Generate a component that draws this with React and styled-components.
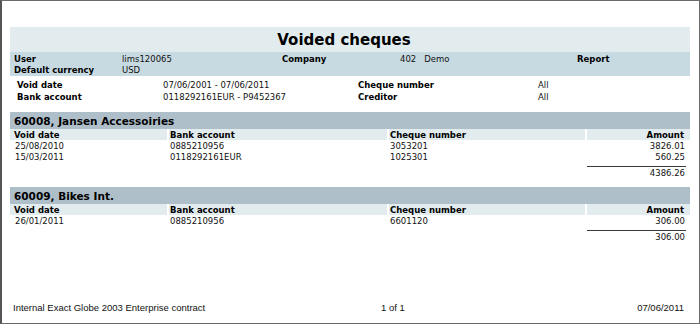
import styled, { createGlobalStyle } from 'styled-components';

const GlobalStyle = createGlobalStyle`
  html, body {
    margin: 0;
    padding: 0;
    background: #ffffff;
  }
  body {
    font-family: "DejaVu Sans", Verdana, sans-serif;
    color: #111;
  }
`;

const Page = styled.div`
  box-sizing: border-box;
  width: 700px;
  height: 324px;
  border: 1px solid #6a6a6a;
  border-left: 2px solid #555;
  padding: 26px 9px 0 8px;
  display: flex;
  flex-direction: column;
`;

const TitleBand = styled.div`
  height: 25px;
  background: #e2ecef;
  display: flex;
  align-items: center;
  justify-content: center;
  padding-right: 12px;
  font-size: 15px;
  font-weight: bold;
  color: #000;
`;

const InfoBand = styled.div`
  height: 24px;
  box-sizing: border-box;
  background: #c8dae1;
  padding: 1px 0 0 4px;
  display: grid;
  grid-template-columns: 108px 160px 118px 177px 1fr;
  grid-auto-rows: 11px;
  align-items: center;
`;

const Filters = styled.div`
  padding: 3px 0 2px 7px;
  display: grid;
  grid-template-columns: 146px 195px 180px 1fr;
  grid-auto-rows: 12px;
  align-items: center;
`;

const Label = styled.span`
  font-size: 8.5px;
  font-weight: bold;
  color: #000;
  white-space: nowrap;
`;

const Value = styled.span`
  font-size: 8.5px;
  white-space: nowrap;
  display: flex;
  gap: ${(p) => p.$gap || 0}px;
`;

const Section = styled.section`
  margin-top: ${(p) => p.$top}px;
`;

const SectionHeader = styled.div`
  height: 17px;
  background: #aebfca;
  padding-left: 4px;
  display: flex;
  align-items: center;
  font-size: 10.5px;
  font-weight: bold;
  color: #000;
`;

const Row = styled.div`
  display: grid;
  grid-template-columns: 157px 218px 196px 1fr;
  column-gap: 2px;
  height: 11px;
  align-items: center;
`;

const HeadCell = styled.div`
  height: 100%;
  background: #e2ecef;
  display: flex;
  align-items: center;
  justify-content: ${(p) => (p.$right ? 'flex-end' : 'flex-start')};
  padding: ${(p) => (p.$right ? '0 6px 0 0' : `0 0 0 ${p.$indent || 1}px`)};
  font-size: 8.5px;
  font-weight: bold;
  color: #000;
  white-space: nowrap;
`;

const Cell = styled.div`
  font-size: 8.5px;
  white-space: nowrap;
  text-align: ${(p) => (p.$right ? 'right' : 'left')};
  padding: ${(p) => (p.$right ? '0 5px 0 0' : `0 0 0 ${p.$indent || 1}px`)};
`;

const TotalRow = styled(Row)`
  margin-top: 4px;
  height: 12px;
`;

const TotalCell = styled.div`
  grid-column: 4;
  margin-right: 4px;
  border-top: 1px solid #3a3a3a;
  padding: 1px 1px 0 0;
  text-align: right;
  font-size: 8.5px;
`;

const Footer = styled.footer`
  margin-top: auto;
  padding: 0 6px 10px 3px;
  display: grid;
  grid-template-columns: 368px 1fr auto;
  font-family: "Liberation Sans", Arial, sans-serif;
  font-size: 9.5px;
  color: #111;
`;

const sections = [
  {
    name: '60008, Jansen Accessoiries',
    top: 7,
    rows: [
      ['25/08/2010', '0885210956', '3053201', '3826.01'],
      ['15/03/2011', '0118292161EUR', '1025301', '560.25'],
    ],
    total: '4386.26',
  },
  {
    name: '60009, Bikes Int.',
    top: 9,
    rows: [['26/01/2011', '0885210956', '6601120', '306.00']],
    total: '306.00',
  },
];

const ChequeSection = ({ name, top, rows, total }) => (
  <Section $top={top}>
    <SectionHeader>{name}</SectionHeader>
    <Row>
      <HeadCell $indent={4}>Void date</HeadCell>
      <HeadCell>Bank account</HeadCell>
      <HeadCell>Cheque number</HeadCell>
      <HeadCell $right>Amount</HeadCell>
    </Row>
    {rows.map((r) => (
      <Row key={r[2]}>
        <Cell $indent={5}>{r[0]}</Cell>
        <Cell>{r[1]}</Cell>
        <Cell>{r[2]}</Cell>
        <Cell $right>{r[3]}</Cell>
      </Row>
    ))}
    <TotalRow>
      <TotalCell>{total}</TotalCell>
    </TotalRow>
  </Section>
);

export default function App() {
  return (
    <>
      <GlobalStyle />
      <Page>
        <TitleBand>Voided cheques</TitleBand>
        <InfoBand>
          <Label>User</Label>
          <Value>lims120065</Value>
          <Label>Company</Label>
          <Value $gap={8}>
            <span>402</span>
            <span>Demo</span>
          </Value>
          <Label>Report</Label>
          <Label>Default currency</Label>
          <Value>USD</Value>
        </InfoBand>
        <Filters>
          <Label>Void date</Label>
          <Value>07/06/2001 - 07/06/2011</Value>
          <Label>Cheque number</Label>
          <Value>All</Value>
          <Label>Bank account</Label>
          <Value>0118292161EUR - P9452367</Value>
          <Label>Creditor</Label>
          <Value>All</Value>
        </Filters>
        {sections.map((s) => (
          <ChequeSection key={s.name} {...s} />
        ))}
        <Footer>
          <span>Internal Exact Globe 2003 Enterprise contract</span>
          <span>1 of 1</span>
          <span>07/06/2011</span>
        </Footer>
      </Page>
    </>
  );
}
